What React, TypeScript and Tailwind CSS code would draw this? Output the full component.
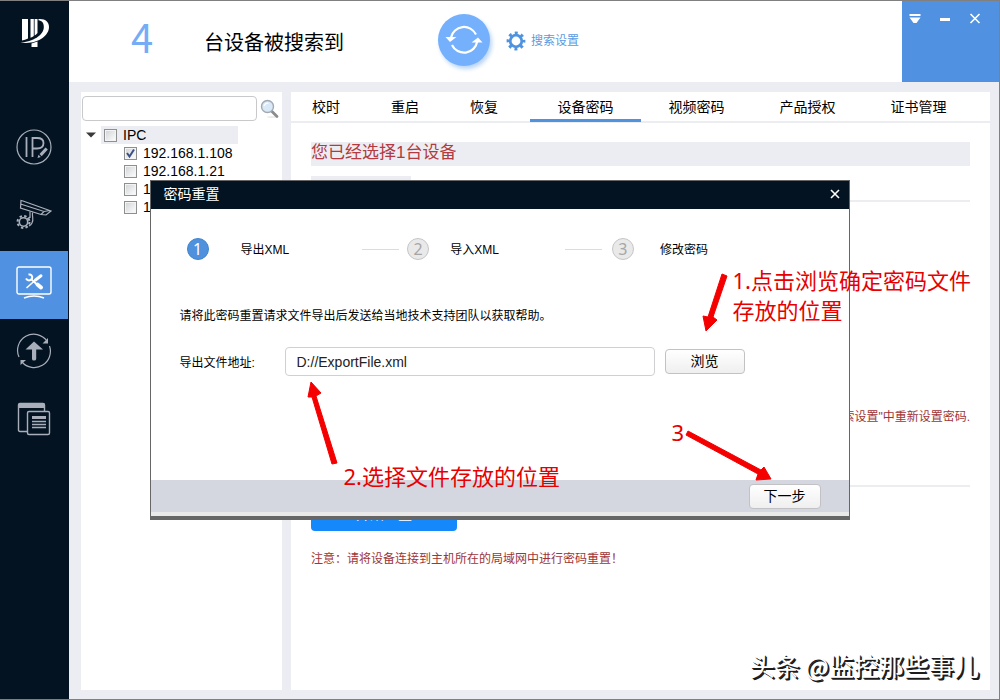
import React from "react";

const LATIN = "font-['Liberation_Sans','Noto_Sans_CJK_SC',sans-serif]";

function Logo() {
  return (
    <svg width="30" height="30" viewBox="0 0 30 30" aria-hidden="true">
      <path d="M2 1H8V20.500Q5 22 2 22.400Z" fill="#fff" />
      <path d="M10.500 1H13.800V18Q12.300 19.200 10.500 19.800Z" fill="#fff" />
      <path d="M14.600 1H17.500V15Q16.200 16.600 14.600 17.600Z" fill="#fff" />
      <path d="M18.500 1C25.500 0.500 29 4 29 9C29 18 17 27 0.500 24.500C13 24 23.500 17 23.800 9.500C24 5 22 2.800 18.500 2.300Z" fill="#fff" />
      <path d="M11.500 25.500L17.500 23.500V29H11.500Z" fill="#fff" />
    </svg>
  );
}

function IpEditIcon() {
  return (
    <svg width="36" height="36" viewBox="0 0 36 36" fill="none" stroke="#a9afba" aria-hidden="true">
      <circle cx="18" cy="18" r="17" strokeWidth="1.200" />
      <path d="M10.500 8V28M16.500 28V9H21C25.500 9 27.500 11 27.500 14C27.500 17.500 25.500 19.500 21 19.500H17" strokeWidth="1.800" />
      <path d="M21.500 29L22.500 25.800L24.800 28ZM23.500 25L29.500 18.500L31.800 20.500L25.700 27.200Z" fill="#a9afba" stroke="none" />
    </svg>
  );
}

function CameraIcon() {
  return (
    <svg width="36" height="32" viewBox="0 0 36 32" fill="none" stroke="#a9afba" strokeWidth="1.200" aria-hidden="true">
      <path d="M5 1.500L4.500 9L25 15.500L30 16L35 12L7 2ZM4.500 5L28 12.500L34 11.500M28 12.500L25 15.500" />
      <path d="M14 12.500V19M16.500 13.500C16 19 18 20 16 24C15 26 14 26.500 13 27M14 18L11 20" />
      <circle cx="7.500" cy="23" r="4.200" strokeWidth="1.600" />
      <circle cx="7.500" cy="23" r="6" strokeWidth="2" strokeDasharray="2.400 2.312" />
    </svg>
  );
}

function ToolsIcon() {
  return (
    <svg width="36" height="34" viewBox="0 0 36 34" fill="none" stroke="#fff" strokeWidth="1.400" aria-hidden="true">
      <rect x="1" y="1" width="34" height="27" rx="2" />
      <path d="M8 32Q18 28 28 32" strokeWidth="1.600" />
      <path d="M10.500 22L20 13.500" strokeWidth="1.600" />
      <path d="M19.500 14L25 9.800" strokeWidth="3" strokeLinecap="round" />
      <path d="M15.500 13.500L21 18.500" strokeWidth="1.800" />
      <path d="M21.500 18.500L25 21.500" strokeWidth="4" strokeLinecap="round" />
      <path d="M12.500 8.500C15 8 17 10 16 12.500C14.500 15 11.500 15 10 12.500" strokeWidth="2" />
    </svg>
  );
}

function UpgradeIcon() {
  return (
    <svg width="36" height="36" viewBox="0 0 36 36" fill="none" stroke="#a9afba" strokeWidth="1.200" aria-hidden="true">
      <path d="M3 24A16.200 16.200 0 0 1 31 8M33.500 13A16.200 16.200 0 0 1 6 29" />
      <path d="M32 5V10.500H26.500Z M4.500 32V27H10Z" fill="#a9afba" stroke="none" />
      <path d="M18 8.500L27 16.500H20.200V26Q20.200 27.500 18 27.500Q16 27.500 16 26V16.500H9.500Z" fill="#a9afba" stroke="none" />
    </svg>
  );
}

function TemplateIcon() {
  return (
    <svg width="34" height="34" viewBox="0 0 34 34" fill="none" stroke="#a9afba" strokeWidth="1.400" aria-hidden="true">
      <path d="M10.500 29.500H3Q1.500 29.500 1.500 28V3Q1.500 1.500 3 1.500H26Q27.500 1.500 27.500 3V9" />
      <path d="M1.500 1.500H27.500V6H1.500Z" fill="#a9afba" stroke="none" />
      <rect x="10.500" y="9.500" width="22" height="23" rx="1.500" />
      <path d="M15 14H29V17H15Z" fill="#a9afba" stroke="none" />
      <path d="M15 19.500H29M15 22.500H29M15 25.500H29" />
    </svg>
  );
}

function RefreshIcon() {
  return (
    <svg width="52" height="52" viewBox="0 0 52 52" fill="none" stroke="#fff" strokeWidth="2.200" aria-hidden="true">
      <path d="M13 23.500A13.300 13.300 0 0 1 38 20.500M39.200 27.500A13.300 13.300 0 0 1 14 31" />
      <path d="M7.500 23H18.500L12 28Z" fill="#fff" stroke="none" />
      <path d="M33.500 28.500H44.500L40 23.500Z" fill="#fff" stroke="none" />
    </svg>
  );
}

function GearIcon() {
  return (
    <svg width="20" height="20" viewBox="0 0 20 20" fill="none" stroke="#4f93df" aria-hidden="true">
      <circle cx="10" cy="10" r="5.800" strokeWidth="2.800" />
      <circle cx="10" cy="10" r="8" strokeWidth="2.800" strokeDasharray="3 3.283" strokeDashoffset="1.500" />
    </svg>
  );
}

function MagnifierIcon() {
  return (
    <svg width="20" height="20" viewBox="0 0 20 20" fill="none" aria-hidden="true">
      <ellipse cx="12" cy="18" rx="5" ry="1" fill="#ececec" />
      <path d="M11.500 12L17 17.500" stroke="#8b8b8b" strokeWidth="2.800" strokeLinecap="round" />
      <circle cx="7.500" cy="7.500" r="6" fill="#d9e9f8" stroke="#a3a9b2" strokeWidth="1.400" />
      <path d="M4 7Q5 4 8.500 4" stroke="#fff" strokeWidth="1.200" />
    </svg>
  );
}

const NAV = [
  { label: "修改IP", icon: <IpEditIcon /> },
  { label: "设备配置", icon: <CameraIcon /> },
  { label: "系统设置", icon: <ToolsIcon />, active: true },
  { label: "设备升级", icon: <UpgradeIcon /> },
  { label: "模板", icon: <TemplateIcon /> },
];

function Sidebar() {
  return (
    <aside className="flex w-[69px] shrink-0 flex-col bg-[#041322]">
      <div className="flex h-[114px] justify-center pt-[17px]">
        <Logo />
      </div>
      <nav className="flex flex-col pr-px">
        {NAV.map((n) => (
          <button
            key={n.label}
            type="button"
            aria-label={n.label}
            className={`flex h-[68px] items-center justify-center pb-1 ${n.active ? "bg-[#5092e1]" : ""}`}
          >
            {n.icon}
          </button>
        ))}
      </nav>
    </aside>
  );
}

function Header() {
  return (
    <header className="flex h-[81px] shrink-0 bg-white">
      <div className="flex flex-1 items-center pb-[3px]">
        <span className="ml-[62px] w-[73px] pb-[8px] font-['Noto_Sans_CJK_SC',sans-serif] text-[40px] leading-[40px] text-[#74adf6]">4</span>
        <span className="w-[234px] pt-[6px] text-[20px] text-black">台设备被搜索到</span>
        <button
          type="button"
          aria-label="刷新"
          className="flex h-[52px] w-[52px] shrink-0 items-center justify-center rounded-full bg-[#74b0fb] shadow-[2px_3px_4px_#b9d4f4]"
        >
          <RefreshIcon />
        </button>
        <button type="button" className="ml-4 flex items-center gap-[5px] pt-[2px] text-[12px] text-[#5b9bdf]">
          <GearIcon />
          搜索设置
        </button>
      </div>
      <div className="flex w-[97px] items-start justify-between bg-[#5092e1] pt-[11px] pr-[17px] pl-[6px] text-white">
        <button type="button" aria-label="菜单" className="h-[14px] w-[14px]">
          <svg width="14" height="14" viewBox="0 0 14 14" fill="#fff" aria-hidden="true">
            <path d="M1.500 2H12.500V4H1.500ZM1.500 5.500H12.500L8.500 11H5.500Z" />
          </svg>
        </button>
        <button type="button" aria-label="最小化" className="h-[14px] w-[14px]">
          <svg width="14" height="14" viewBox="0 0 14 14" fill="#fff" aria-hidden="true">
            <path d="M2 6H12V9H2Z" />
          </svg>
        </button>
        <button type="button" aria-label="关闭窗口" className="h-[14px] w-[14px]">
          <svg width="14" height="14" viewBox="0 0 14 14" stroke="#fff" strokeWidth="1.600" aria-hidden="true">
            <path d="M2.500 2L11.500 11M11.500 2L2.500 11" />
          </svg>
        </button>
      </div>
    </header>
  );
}

function TreeBox({ label, checked }: { label: string; checked?: boolean }) {
  return (
    <label className="flex h-[18px] items-center gap-[6px] text-[14px] leading-[18px] text-black">
      <span className="relative flex h-[13px] w-[13px]">
        <input
          type="checkbox"
          defaultChecked={checked}
          className="peer h-[13px] w-[13px] appearance-none border border-[#8e8f8f] bg-linear-to-br from-[#cfd2d6] to-white shadow-[inset_0_0_0_1px_#f4f4f4]"
        />
        <svg className="pointer-events-none absolute inset-0 hidden peer-checked:block" width="13" height="13" viewBox="0 0 13 13" fill="none" aria-hidden="true">
          <path d="M3 6L5.500 9.500L10 2.500" stroke="#3c4f86" strokeWidth="2" />
        </svg>
      </span>
      {label}
    </label>
  );
}

function DeviceTree() {
  return (
    <section className="flex w-[201px] shrink-0 flex-col bg-white pt-1">
      <div className="flex items-center gap-[3px] pl-px">
        <input
          type="text"
          aria-label="搜索设备"
          className="h-[25px] w-[175px] rounded-[4px] border border-[#c9c9cc] bg-white px-2 text-[14px] outline-none"
        />
        <button type="button" aria-label="搜索">
          <MagnifierIcon />
        </button>
      </div>
      <div className="mt-[5px] flex items-center">
        <button type="button" aria-label="展开IPC" className="flex w-5 justify-center">
          <svg width="10" height="6" viewBox="0 0 10 6" aria-hidden="true">
            <path d="M0 0.500H10L5 5.500Z" fill="#3a3a3a" />
          </svg>
        </button>
        <div className="w-[137px] bg-[#ecedf2] pl-[3px]">
          <TreeBox label="IPC" />
        </div>
      </div>
      <div className="flex flex-col pl-[43px]">
        <TreeBox label="192.168.1.108" checked />
        <TreeBox label="192.168.1.21" />
        <TreeBox label="192.168.1.22" />
        <TreeBox label="192.168.1.23" />
      </div>
    </section>
  );
}

function Tabs() {
  return (
    <nav className="flex h-[31px] items-stretch border-b-2 border-[#ecedf0] pl-[10px] text-[14px] text-black">
      <div className="flex gap-[29px]">
        {["校时", "重启", "恢复"].map((t) => (
          <button key={t} type="button" className="w-[50px] pt-[2px]">
            {t}
          </button>
        ))}
      </div>
      <div className="ml-[21px] flex">
        {["设备密码", "视频密码", "产品授权", "证书管理"].map((t, i) => (
          <button key={t} type="button" className="relative w-[111px] pt-[2px]">
            {t}
            {i === 0 && <span className="absolute inset-x-0 -bottom-px h-[3px] bg-[#5092dd]" />}
          </button>
        ))}
      </div>
    </nav>
  );
}

function PasswordPanel() {
  return (
    <section className="flex min-w-0 flex-1 flex-col bg-white">
      <Tabs />
      <div className="flex flex-col pt-[19px] pr-5 pl-5">
        <h2 className="h-6 bg-[#ecedf2] text-[17px] leading-[22px] text-[#b23a40]">您已经选择1台设备</h2>
        <div className="mt-[10px] h-[18px] w-[100px] bg-[#ecedf2]" />
        <div className="mt-[6px] flex h-[287px] flex-col justify-end border-y-2 border-[#ecedf0] pb-[59px]">
          <p className="text-right text-[12px] leading-[18px] text-[#a03438]">请在"搜索设置"中重新设置密码.</p>
        </div>
        <button type="button" className="mt-[14px] h-[30px] w-[146px] rounded-[4px] bg-[#1589fb] pb-[4px] text-[14px] text-white">
          开始重置
        </button>
        <p className="mt-[19px] text-[12px] leading-[18px] text-[#a03438]">注意：请将设备连接到主机所在的局域网中进行密码重置！</p>
      </div>
    </section>
  );
}

function Step({ n, label, gap, active }: { n: number; label: string; gap: string; active?: boolean }) {
  return (
    <li className={`flex items-center ${gap}`}>
      <span
        className={`flex h-[22px] w-[22px] items-center justify-center rounded-full border font-['Noto_Sans',sans-serif] text-[16px] leading-5 ${
          active ? "border-[#4285cf] bg-[#4f91dc] text-white" : "border-[#c6c6c6] bg-[#e9e9e9] text-[#a6a6a6]"
        }`}
      >
        {n}
      </span>
      <span className="pt-[2px] text-[12px] text-black">{label}</span>
    </li>
  );
}

const BTN = "rounded-[4px] border border-[#c2c2c4] bg-linear-to-b from-white to-[#efeff0] text-[14px] text-black";
const NOTE = "absolute font-['Noto_Sans','Noto_Sans_CJK_SC',sans-serif] text-[22px] leading-[30px] whitespace-nowrap text-[#e60000]";

function ResetDialog() {
  return (
    <div
      role="dialog"
      aria-label="密码重置"
      className="relative flex w-[700px] flex-col border border-b-4 border-[#666] bg-white"
    >
      <header className="flex h-7 items-center justify-between bg-[#041322] pr-2 pb-[2px] pl-[13px] text-[14px] text-white">
        <h1>密码重置</h1>
        <button type="button" aria-label="关闭">
          <svg width="12" height="12" viewBox="0 0 12 12" stroke="#fff" strokeWidth="1.600" aria-hidden="true">
            <path d="M2 2L10 10M10 2L2 10" />
          </svg>
        </button>
      </header>
      <div className="flex h-[271px] flex-col pt-[29px] pl-[29px]">
        <ol className="flex items-center pl-[7px]">
          <Step n={1} label="导出XML" gap="gap-8" active />
          <li aria-hidden="true" className="mr-2 ml-[73px] h-px w-[37px] bg-[#dcdcdc]" />
          <Step n={2} label="导入XML" gap="gap-[21px]" />
          <li aria-hidden="true" className="mr-[10px] ml-[66px] h-px w-[37px] bg-[#dcdcdc]" />
          <Step n={3} label="修改密码" gap="gap-[26px]" />
        </ol>
        <p className="mt-[47px] text-[12px] leading-[18px] text-black">请将此密码重置请求文件导出后发送给当地技术支持团队以获取帮助。</p>
        <div className="mt-[22px] flex items-center">
          <label htmlFor="export-path" className="w-[105px] pt-[2px] text-[12px] text-black">
            导出文件地址:
          </label>
          <input
            id="export-path"
            type="text"
            defaultValue="D://ExportFile.xml"
            className="h-[29px] w-[370px] rounded-[4px] border border-[#d0d0d2] bg-white px-[11px] text-[14px] text-[#222] outline-none"
          />
          <button type="button" className={`ml-[10px] h-[25px] w-20 ${BTN}`}>
            浏览
          </button>
        </div>
      </div>
      <footer className="flex h-9 items-start justify-end border-b-4 border-[#e9e9ea] bg-[#d4d7e0] pt-1 pr-7">
        <button type="button" className={`h-[25px] w-[72px] ${BTN}`}>
          下一步
        </button>
      </footer>

      <p className={`${NOTE} top-[84px] left-[582px]`}>
        1.点击浏览确定密码文件
        <br />
        存放的位置
      </p>
      <p className={`${NOTE} top-[280px] left-[193px]`}>2.选择文件存放的位置</p>
      <p className={`${NOTE} top-[236px] left-[521px]`}>3</p>
      <svg className="pointer-events-none absolute top-0 left-0" width="698" height="335" viewBox="151 181 698 335" fill="#f40000" aria-hidden="true">
        <path d="M722 274L727 276L713 317L717 320L706 331L703 316L708 317Z" stroke="#f40000" />
        <path d="M311 382L321 393L316 396L337 463L332 464L312 397L308 397Z" stroke="#f40000" />
        <path d="M688 431L761 470L764 467L771 479L756 480L758 474L686 435Z" stroke="#f40000" />
      </svg>
    </div>
  );
}

export default function App() {
  return (
    <div className={`relative flex min-h-screen border-t border-r border-b border-[#808080] bg-[#ecedf3] ${LATIN}`}>
      <Sidebar />
      <div className="flex min-w-0 flex-1 flex-col">
        <Header />
        <main className="flex flex-1 gap-[9px] pt-[10px] pr-[9px] pb-[9px] pl-3">
          <DeviceTree />
          <PasswordPanel />
        </main>
      </div>
      <div className="absolute inset-0 flex items-center justify-center">
        <ResetDialog />
      </div>
      <p className="absolute right-5 bottom-4 font-['Noto_Sans_CJK_SC',sans-serif] text-[25px] leading-9 whitespace-nowrap text-white [text-shadow:2px_2px_0_#1c1c1c,1px_1px_0_#1c1c1c]">
        头条 @监控那些事儿
      </p>
    </div>
  );
}
